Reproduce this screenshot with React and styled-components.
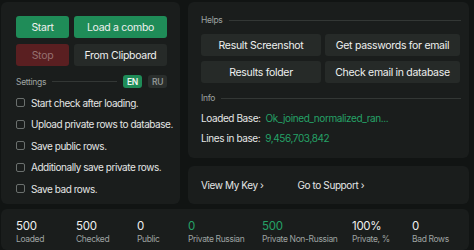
import React from 'react';
import styled, {createGlobalStyle} from 'styled-components';

const Global = createGlobalStyle`
    html, body {
        margin: 0;
        background: #111413;
        font-family: Inter, "Noto Sans", sans-serif;
        letter-spacing: -0.3px;
        color: #e4e6e5;
        white-space: nowrap;
    }
`
const Page = styled.div`
    width: 474px;
    height: 250px;
    overflow: hidden;
    box-sizing: border-box;
    padding: 2px 5px 0 1px;
    display: grid;
    grid-template-columns: 179px 1fr;
    grid-template-rows: 202px 1fr;
    column-gap: 8px;
    row-gap: 5px;
`
const Panel = styled.div`
    background: #1a1d1c;
    border-radius: 6px;
    box-sizing: border-box;
    padding: ${p => p.$pad || '14px 13px 0 15px'};
`
const Column = styled.div`
    display: flex;
    flex-direction: column;
    gap: 8px;
`
const ButtonGrid = styled.div`
    display: grid;
    grid-template-columns: ${p => p.$cols};
    gap: ${p => p.$gap || '6px 5px'};
`
const Button = styled.div`
    height: 22px;
    border-radius: 3px;
    display: flex;
    align-items: center;
    justify-content: center;
    font-size: 10.5px;
    background: ${p => p.$kind === 'green' ? '#1f8c58' : p.$kind === 'red' ? '#5a1f21' : '#262a28'};
    color: ${p => p.$kind === 'red' ? '#96706f' : '#eef0ef'};
`
const Section = styled.div`
    display: flex;
    align-items: center;
    gap: 6px;
    margin: ${p => p.$margin || '0'};
    font-size: 8.5px;
    color: #9ea3a1;
`
const Line = styled.div`
    flex: 1;
    height: 1px;
    background: #333735;
`
const Lang = styled.div`
    width: 19px;
    height: 13px;
    border-radius: 3px;
    display: flex;
    align-items: center;
    justify-content: center;
    font-size: 8.5px;
    font-weight: 600;
    background: ${p => p.$active ? '#1f8c58' : '#2a2e2c'};
    color: ${p => p.$active ? '#f2f4f3' : '#8e9391'};
`
const Checks = styled.div`
    display: flex;
    flex-direction: column;
    gap: 8.5px;
    margin-top: 8px;
`
const CheckRow = styled.label`
    display: flex;
    align-items: center;
    gap: 6px;
    font-size: 10px;
    letter-spacing: -0.45px;
    height: 13px;
`
const Box = styled.span`
    flex-shrink: 0;
    width: 7px;
    height: 7px;
    border: 1px solid #6b706e;
    border-radius: 2px;
`
const InfoRow = styled.div`
    display: flex;
    gap: 5px;
    font-size: 10px;
    letter-spacing: -0.4px;
    margin-top: ${p => p.$top || '0'};
`
const Value = styled.span`
    color: #25a267;
`
const Links = styled.div`
    display: flex;
    align-items: center;
    gap: 34px;
    font-size: 10px;
    letter-spacing: -0.4px;
    height: 100%;
`
const Stats = styled(Panel)`
    grid-column: 1 / 3;
    display: grid;
    grid-template-columns: 60px 61px 51px 74px 90px 60px auto;
    padding: 10px 15px 0;
`
const Stat = styled.div`
    display: flex;
    flex-direction: column;
    gap: 1px;
`
const Num = styled.span`
    font-size: 11.5px;
    color: ${p => p.$green ? '#25a267' : '#eef0ef'};
`
const Label = styled.span`
    font-size: 8.5px;
    letter-spacing: -0.35px;
    color: #9ea3a1;
`

const settings = [
    'Start check after loading.',
    'Upload private rows to database.',
    'Save public rows.',
    'Additionally save private rows.',
    'Save bad rows.'
];

const stats = [
    ['500', 'Loaded'],
    ['500', 'Checked'],
    ['0', 'Public'],
    ['0', 'Private Russian', true],
    ['500', 'Private Non-Russian', true],
    ['100%', 'Private, %'],
    ['0', 'Bad Rows']
];

export default function App() {
    return (
        <Page>
            <Global/>
            <Panel>
                <ButtonGrid $cols="53px 93px">
                    <Button $kind="green">Start</Button>
                    <Button $kind="green">Load a combo</Button>
                    <Button $kind="red">Stop</Button>
                    <Button>From Clipboard</Button>
                </ButtonGrid>
                <Section $margin="9px 0 0">
                    Settings
                    <Line/>
                    <Lang $active>EN</Lang>
                    <Lang>RU</Lang>
                </Section>
                <Checks>
                    {settings.map(s => (
                        <CheckRow key={s}><Box/>{s}</CheckRow>
                    ))}
                </Checks>
            </Panel>
            <Column>
                <Panel $pad="13px 8px 0 13px" style={{height: 156}}>
                    <Section>
                        Helps
                        <Line/>
                    </Section>
                    <ButtonGrid $cols="120px 135px" $gap="5px 4px" style={{marginTop: 9}}>
                        <Button>Result Screenshot</Button>
                        <Button>Get passwords for email</Button>
                        <Button>Results folder</Button>
                        <Button>Check email in database</Button>
                    </ButtonGrid>
                    <Section $margin="10px 0 0">
                        Info
                        <Line/>
                    </Section>
                    <InfoRow $top="9px">Loaded Base: <Value>Ok_joined_normalized_ran...</Value></InfoRow>
                    <InfoRow $top="8px">Lines in base: <Value>9,456,703,842</Value></InfoRow>
                </Panel>
                <Panel $pad="0 13px" style={{height: 38}}>
                    <Links>
                        <span>View My Key ›</span>
                        <span>Go to Support ›</span>
                    </Links>
                </Panel>
            </Column>
            <Stats>
                {stats.map(([n, l, g]) => (
                    <Stat key={l}>
                        <Num $green={g}>{n}</Num>
                        <Label>{l}</Label>
                    </Stat>
                ))}
            </Stats>
        </Page>
    );
}
